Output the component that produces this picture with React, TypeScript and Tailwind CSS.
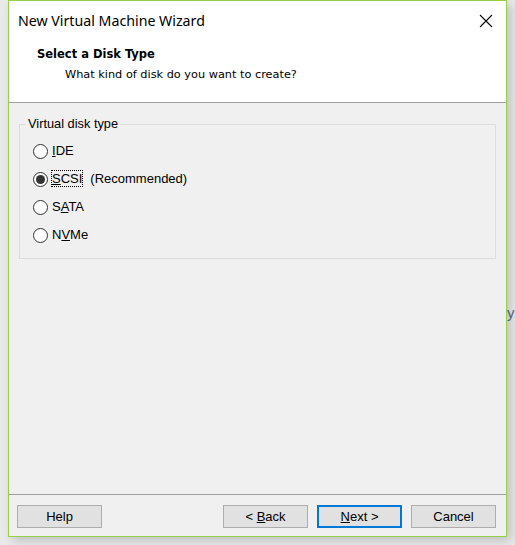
import React from "react";

const ui = { fontFamily: '"Liberation Sans", Arial, sans-serif' };
const tahoma = { fontFamily: '"DejaVu Sans", Verdana, sans-serif' };

function Radio({ checked, children }: { checked?: boolean; children: React.ReactNode }) {
  return (
    <div className="flex items-center h-[28px]">
      <span className="w-[15px] h-[15px] rounded-full border border-[#333] bg-white flex items-center justify-center">
        {checked && <span className="w-[9px] h-[9px] rounded-full bg-[#333]" />}
      </span>
      <span className="ml-[4px] text-[13px] text-black">{children}</span>
    </div>
  );
}

function Btn({ children, primary }: { children: React.ReactNode; primary?: boolean }) {
  return (
    <button
      className={
        primary
          ? "w-[85px] h-[23px] bg-[#e1e1e1] border-2 border-[#0078d7] text-[13px] text-black"
          : "w-[85px] h-[23px] bg-[#e1e1e1] border border-[#adadad] text-[13px] text-black"
      }
    >
      {children}
    </button>
  );
}

export default function App() {
  return (
    <div className="w-[515px] h-[545px] bg-[#eaeaea] relative overflow-hidden" style={ui}>
      <span className="absolute left-[507px] top-[302px] text-[15px] text-[#5a6b8a]">y</span>
      <div className="ml-[8px] w-[499px] h-[537px] border border-[#96cf4a] bg-[#f0f0f0] flex flex-col relative shadow-[4px_4px_10px_rgba(0,0,0,0.18)]">
        {/* title + header */}
        <div className="bg-white h-[101px] flex flex-col">
          <div className="h-[40px] flex items-center justify-between pl-[9px] pr-[13px]">
            <span className="text-[14.2px] text-black" style={{ fontFamily: '"Noto Sans", sans-serif' }}>
              New Virtual Machine Wizard
            </span>
            <svg width="14" height="14" viewBox="0 0 14 14">
              <path d="M1 1 L13 13 M13 1 L1 13" stroke="#000" strokeWidth="1.1" />
            </svg>
          </div>
          <div className="pl-[28px] pt-[5px]" style={tahoma}>
            <div className="text-[11.5px] font-bold text-black leading-[17px]">Select a Disk Type</div>
            <div className="text-[11.3px] text-black leading-[17px] pl-[28px] mt-[3px]">What kind of disk do you want to create?</div>
          </div>
        </div>
        <div className="h-px bg-[#a0a0a0]" />
        {/* body */}
        <div className="flex-1 pt-[21px] px-[10px]">
          <div className="relative border border-[#dcdcdc] h-[135px] pt-[12px] pl-[13px]">
            <span className="absolute left-[6px] top-[-9px] bg-[#f0f0f0] px-[2px] text-[12.8px] leading-[16px] text-black">
              Virtual disk type
            </span>
            <Radio><u>I</u>DE</Radio>
            <Radio checked>
              <span className="outline-1 outline-dotted outline-black">
                <u>S</u>CSI
              </span>
              <span className="ml-[8px]">(Recommended)</span>
            </Radio>
            <Radio>S<u>A</u>TA</Radio>
            <Radio>N<u>V</u>Me</Radio>
          </div>
        </div>
        <div className="h-px bg-[#a0a0a0]" />
        <div className="h-[41px] flex items-start pt-[10px] pl-[8px] pr-[10px]">
          <Btn>Help</Btn>
          <div className="flex-1" />
          <div className="flex gap-[9px]">
            <Btn>&lt; <u>B</u>ack</Btn>
            <Btn primary><u>N</u>ext &gt;</Btn>
            <Btn>Cancel</Btn>
          </div>
        </div>
      </div>
    </div>
  );
}
